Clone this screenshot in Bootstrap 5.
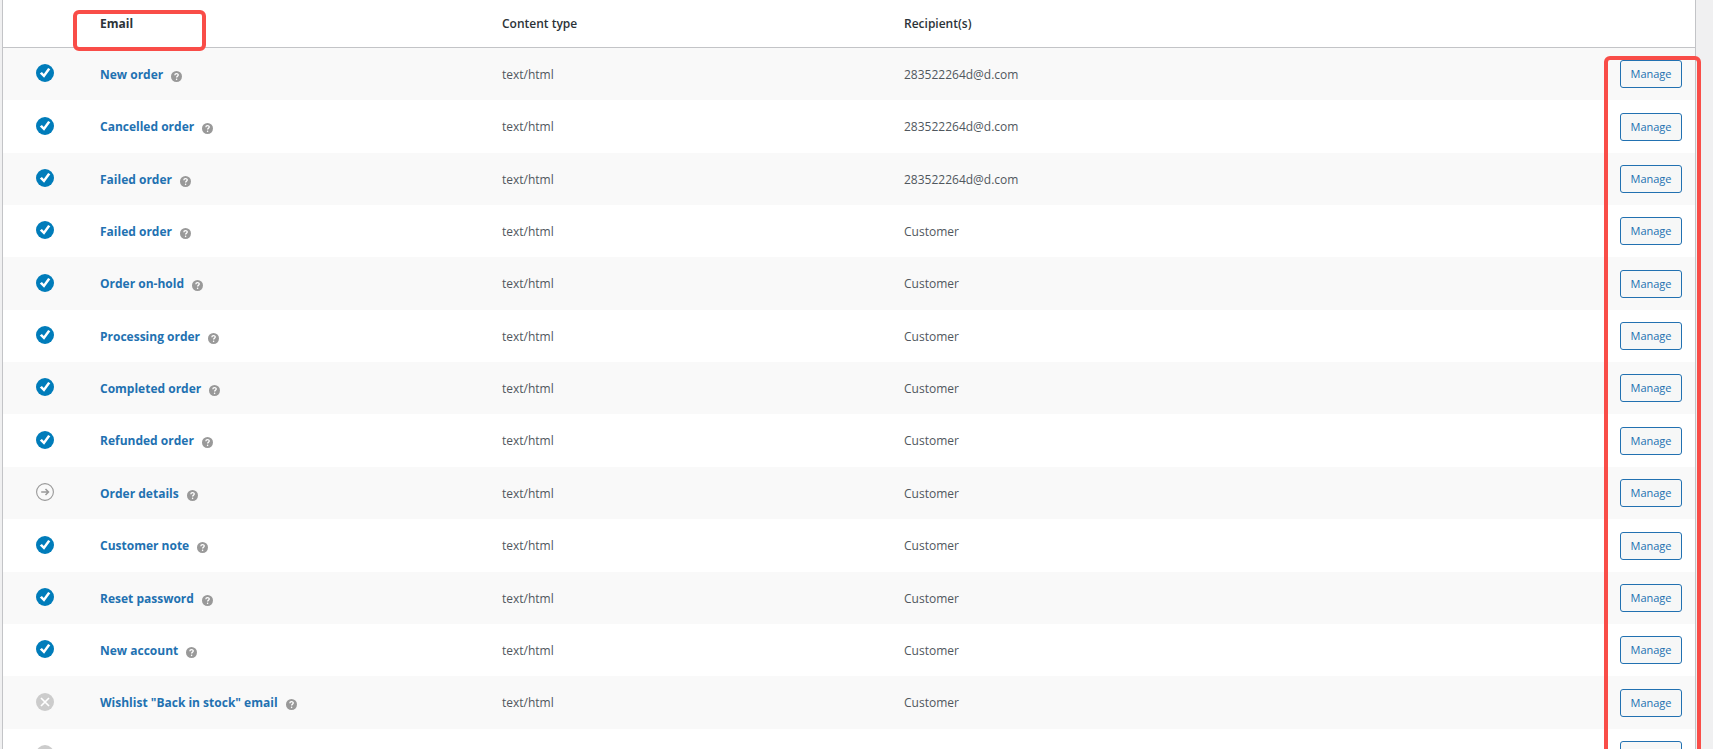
<!DOCTYPE html>
<html lang="en">
<head>
<meta charset="utf-8">
<meta name="viewport" content="width=device-width, initial-scale=1">
<title>Emails</title>
<link href="https://cdn.jsdelivr.net/npm/bootstrap@5.3.0/dist/css/bootstrap.min.css" rel="stylesheet">
<style>
  body { background: #f0f0f1; font-family: "Open Sans", "Noto Sans", sans-serif; font-size: 12px; line-height: 18px; color: #50575e; }
  .panel { margin: 0 17px 0 2px; border: solid #c3c4c7; border-width: 0 1px; background: #fff; }
  .emails { table-layout: fixed; color: #50575e; border-collapse: separate; border-spacing: 0; }
  .emails th, .emails td { padding: 0 13px; }
  .emails thead th { height: 48px; border-bottom: 1px solid #c3c4c7; font-weight: 600; color: #2c3338; }
  .emails thead .name-head { font-weight: 700; }
  .emails tbody td { height: 52px; padding-top: 1px; }
  .emails tbody tr:nth-child(3n+2):nth-child(-n+8) td,
  .emails tbody tr:nth-child(3n+10) td { height: 53px; }
  .emails tbody tr:nth-child(odd) { background: #f9f9f9; }
  .emails tbody .status, .emails tbody .actions { padding-top: 0; }
  .status-col { width: 84px; }
  .status svg { width: 18px; height: 18px; display: block; margin: 0 auto 2px; }
  .emails a { color: #2271b1; font-weight: 700; }
  .help { width: 11px; height: 11px; margin-left: 8px; margin-top: 3px; }
  .manage { height: 28px; min-width: 62px; padding: 0 9px; border: 1px solid #2271b1; border-radius: 3px; background: #f6f7f7; color: #2271b1; font-size: 11px; line-height: 24px; vertical-align: middle; }
  .manage:hover { background: #f0f0f1; border-color: #0a4b78; color: #0a4b78; }
  .callout { position: absolute; border: 4px solid #f94d48; border-radius: 6px; pointer-events: none; }
  .callout-name { left: 73px; top: 10px; width: 133px; height: 41px; }
  .callout-actions { right: 12px; top: 56px; bottom: -12px; width: 97px; }
</style>
</head>
<body>
<svg class="d-none" aria-hidden="true">
  <symbol id="on" viewBox="0 0 18 18"><circle cx="9" cy="9" r="9" fill="#007cba"/><path d="M3.800 9.600 5.900 7.900l1.900 2.100 4.300-6.100 2.200 1.300-6.200 8.600z" fill="#fff"/></symbol>
  <symbol id="manual" viewBox="0 0 18 18"><circle cx="9" cy="9" r="8.4" fill="none" stroke="#999" stroke-width="1.1"/><path d="M5.2 9h7M9.500 6l3 3-3 3" fill="none" stroke="#999" stroke-width="1.5"/></symbol>
  <symbol id="off" viewBox="0 0 18 18"><circle cx="9" cy="9" r="9" fill="#ccc"/><path d="m5 5 8 8m0-8-8 8" stroke="#fff" stroke-width="1.7"/></symbol>
  <symbol id="help" viewBox="0 0 10 10"><circle cx="5" cy="5" r="5" fill="#999"/><path d="M3.500 3.900c0-2 3.100-1.900 3.100-.2C6.600 4.700 5.100 4.700 5.100 6" fill="none" stroke="#fff" stroke-width="1.200"/><circle cx="5.100" cy="7.600" r=".7" fill="#fff"/></symbol>
</svg>
<div class="position-relative vh-100 overflow-hidden">
  <main class="panel">
    <table class="emails w-100">
      <colgroup><col class="status-col"><col><col><col><col></colgroup>
      <thead>
        <tr><th></th><th class="name-head" scope="col">Email</th><th scope="col">Content type</th><th scope="col">Recipient(s)</th><th></th></tr>
      </thead>
      <tbody id="rows"></tbody>
    </table>
  </main>
  <div class="callout callout-name"></div>
  <div class="callout callout-actions"></div>
</div>
<script>
  const admin = '283522264d@d.com';
  const emails = [
    ['on', 'New order', admin], ['on', 'Cancelled order', admin], ['on', 'Failed order', admin],
    ['on', 'Failed order', 'Customer'], ['on', 'Order on-hold', 'Customer'], ['on', 'Processing order', 'Customer'],
    ['on', 'Completed order', 'Customer'], ['on', 'Refunded order', 'Customer'], ['manual', 'Order details', 'Customer'],
    ['on', 'Customer note', 'Customer'], ['on', 'Reset password', 'Customer'], ['on', 'New account', 'Customer'],
    ['off', 'Wishlist "Back in stock" email', 'Customer'], ['off', '', '']
  ];
  document.getElementById('rows').innerHTML = emails.map(([state, name, to]) => `
    <tr>
      <td class="status"><svg aria-hidden="true"><use href="#${state}"/></svg></td>
      <td>${name ? `<div class="d-flex align-items-center"><a class="text-decoration-none" href="#">${name}</a><svg class="help" aria-hidden="true"><use href="#help"/></svg></div>` : ''}</td>
      <td>${name ? 'text/html' : ''}</td>
      <td>${to}</td>
      <td class="actions text-end"><button type="button" class="manage" aria-label="Manage">${name ? 'Manage' : ''}</button></td>
    </tr>`).join('');
</script>
<script src="https://cdn.jsdelivr.net/npm/bootstrap@5.3.0/dist/js/bootstrap.bundle.min.js"></script>
</body>
</html>
